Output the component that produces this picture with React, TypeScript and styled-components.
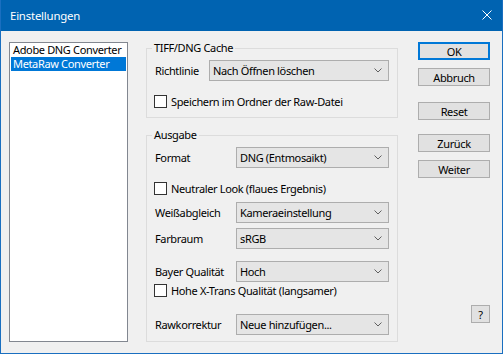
import styled, { createGlobalStyle } from "styled-components";

const GlobalStyle = createGlobalStyle`
  html, body {
    margin: 0;
    padding: 0;
    background: #f0f0f0;
  }
  * {
    box-sizing: border-box;
  }
`

const Window = styled.div`
  width: 503px;
  height: 354px;
  background: #f0f0f0;
  border: 1px solid #1a6fc0;
  border-top: none;
  font-family: "Noto Sans", "Open Sans", sans-serif;
  font-size: 11px;
  letter-spacing: -0.35px;
  color: #000;
  display: flex;
  flex-direction: column;
`

const TitleBar = styled.div`
  height: 31px;
  flex: none;
  background: #0063b1;
  color: #fff;
  display: flex;
  align-items: center;
  justify-content: space-between;
  padding: 0 10px 1px 9px;
  font-size: 11.4px;
  letter-spacing: -0.2px;
`

const Body = styled.div`
  display: flex;
  align-items: flex-start;
  padding: 11px 0 0 8px;
`

const ListBox = styled.div`
  width: 119px;
  height: 300px;
  background: #fff;
  border: 1px solid #828790;
  padding: 0 1px;
`

const ListItem = styled.div<{ $selected?: boolean }>`
  height: 14px;
  line-height: 14px;
  padding-left: 2px;
  white-space: nowrap;
  background: ${p => (p.$selected ? "#0078d7" : "transparent")};
  color: ${p => (p.$selected ? "#fff" : "#000")};
`

const Center = styled.div`
  width: 252px;
  margin: -1px 0 0 18px;
  display: flex;
  flex-direction: column;
`

const Group = styled.fieldset<{ $mt?: number; $pb: number }>`
  margin: ${p => p.$mt ?? 0}px 0 0 0;
  padding: 0 8px ${p => p.$pb}px 7px;
  border: 1px solid #dcdcdc;
  min-width: 0;
`

const Legend = styled.legend`
  padding: 0 2px;
  margin-left: -2px;
  line-height: 14px;
  height: 14px;
`

const Row = styled.div<{ $mt: number; $label: number }>`
  display: grid;
  grid-template-columns: ${p => p.$label}px 1fr;
  align-items: center;
  margin-top: ${p => p.$mt}px;
  height: 21px;
`

const Label = styled.span`
  white-space: nowrap;
  padding-left: 1px;
`

const Select = styled.div`
  height: 21px;
  background: #e5e5e5;
  border: 1px solid #adadad;
  display: flex;
  align-items: center;
  justify-content: space-between;
  padding: 0 6px 0 3px;
  white-space: nowrap;
`

const CheckRow = styled.label<{ $mt: number }>`
  display: flex;
  align-items: center;
  gap: 4px;
  height: 13px;
  margin-top: ${p => p.$mt}px;
  white-space: nowrap;
`

const Box = styled.span`
  width: 13px;
  height: 13px;
  flex: none;
  background: #fff;
  border: 1px solid #333;
`

const Buttons = styled.div`
  display: flex;
  flex-direction: column;
  align-items: flex-end;
  margin: 0 0 0 20px;
  width: 72px;
`

const Button = styled.div<{ $mt: number; $w?: number; $focus?: boolean }>`
  width: ${p => p.$w ?? 72}px;
  height: 18px;
  margin-top: ${p => p.$mt}px;
  background: #e1e1e1;
  border: ${p => (p.$focus ? "2px solid #0078d7" : "1px solid #adadad")};
  display: flex;
  align-items: center;
  justify-content: center;
  line-height: 1;
`

function Chevron() {
  return (
    <svg width="8" height="5" viewBox="0 0 8 5">
      <path d="M0.5 0.5 L4 4 L7.5 0.5" fill="none" stroke="#606060" strokeWidth="1" />
    </svg>
  )
}

function Close() {
  return (
    <svg width="10" height="10" viewBox="0 0 10 10">
      <path d="M0.5 0.5 L9.5 9.5 M9.5 0.5 L0.5 9.5" stroke="#fff" strokeWidth="1" />
    </svg>
  )
}

function Dropdown({ label, value, width, mt }: { label: string; value: string; width: number; mt: number }) {
  return (
    <Row $mt={mt} $label={width}>
      <Label>{label}</Label>
      <Select>
        <span>{value}</span>
        <Chevron />
      </Select>
    </Row>
  )
}

function Check({ text, mt }: { text: string; mt: number }) {
  return (
    <CheckRow $mt={mt}>
      <Box />
      <span>{text}</span>
    </CheckRow>
  )
}

export default function App() {
  return (
    <>
      <GlobalStyle />
      <Window>
        <TitleBar>
          <span>Einstellungen</span>
          <Close />
        </TitleBar>
        <Body>
          <ListBox>
            <ListItem>Adobe DNG Converter</ListItem>
            <ListItem $selected>MetaRaw Converter</ListItem>
          </ListBox>
          <Center>
            <Group $pb={9}>
              <Legend>TIFF/DNG Cache</Legend>
              <Dropdown label="Richtlinie" value="Nach Öffnen löschen" width={55} mt={5} />
              <Check text="Speichern im Ordner der Raw-Datei" mt={14} />
            </Group>
            <Group $mt={10} $pb={6}>
              <Legend>Ausgabe</Legend>
              <Dropdown label="Format" value="DNG (Entmosaikt)" width={82} mt={5} />
              <Check text="Neutraler Look (flaues Ergebnis)" mt={14} />
              <Dropdown label="Weißabgleich" value="Kameraeinstellung" width={82} mt={7} />
              <Dropdown label="Farbraum" value="sRGB" width={82} mt={5} />
              <Dropdown label="Bayer Qualität" value="Hoch" width={82} mt={12} />
              <Check text="Hohe X-Trans Qualität (langsamer)" mt={2} />
              <Dropdown label="Rawkorrektur" value="Neue hinzufügen..." width={82} mt={17} />
            </Group>
          </Center>
          <Buttons>
            <Button $mt={0} $focus>OK</Button>
            <Button $mt={8}>Abbruch</Button>
            <Button $mt={16}>Reset</Button>
            <Button $mt={14}>Zurück</Button>
            <Button $mt={8}>Weiter</Button>
            <Button $mt={127} $w={19}>?</Button>
          </Buttons>
        </Body>
      </Window>
    </>
  )
}
